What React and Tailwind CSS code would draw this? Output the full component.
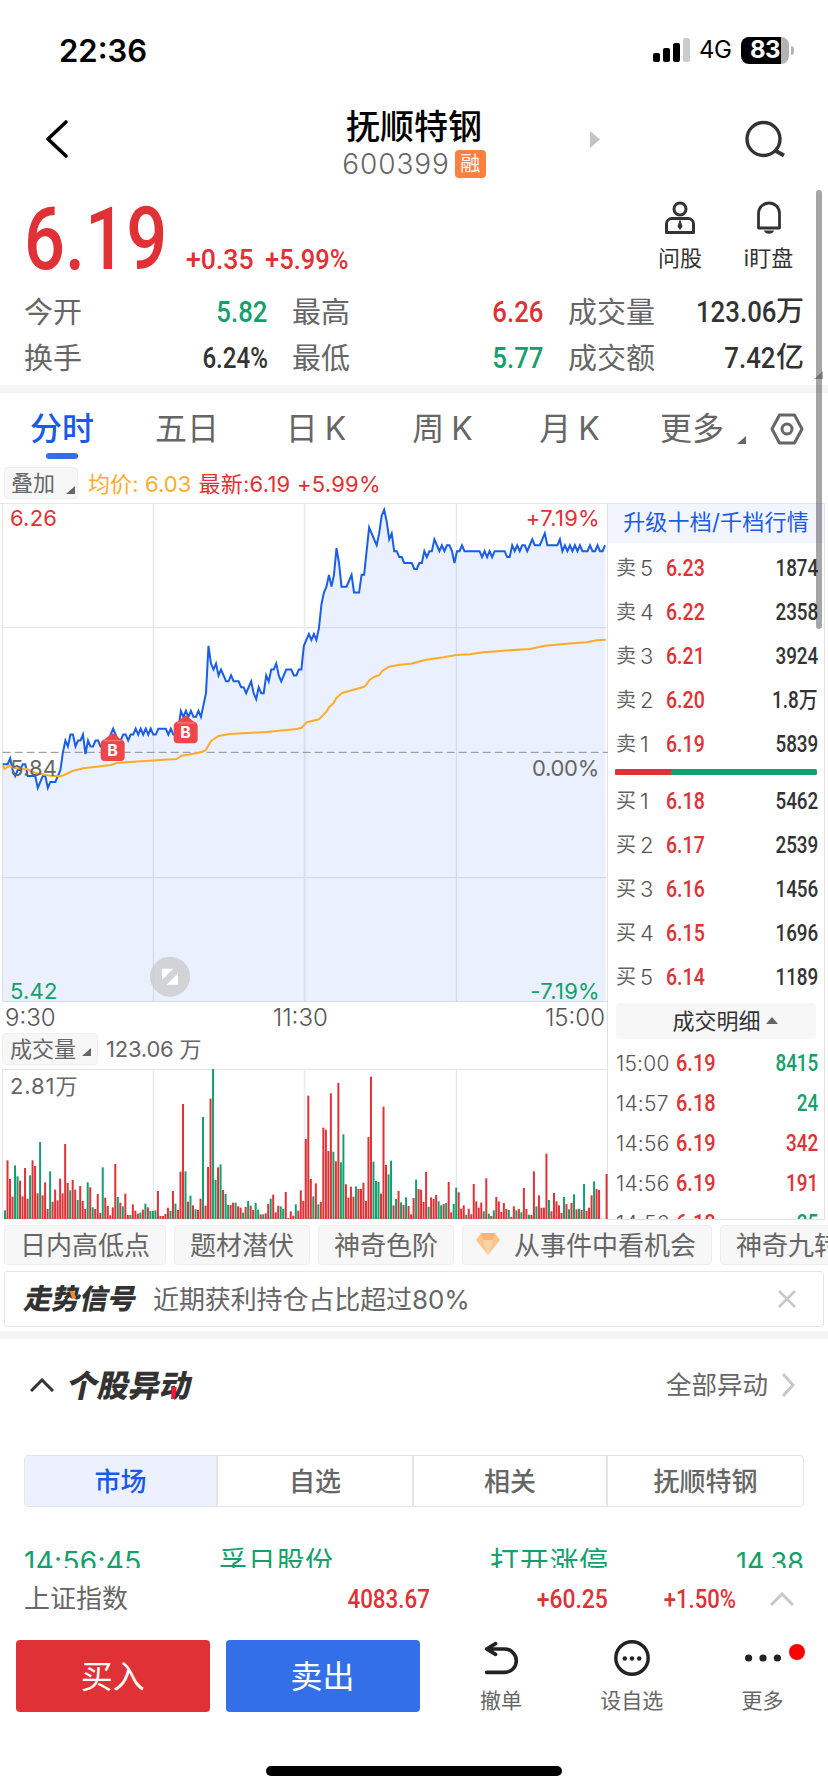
import clsx from "clsx";

const UP = "text-[#e03136]";
const DOWN = "text-[#14a06c]";
const DARK = "text-[#333333]";

// one value per minute, in cents from the previous close (5.84)
const prices = [
  -2, -2, -2, -1, -3, -4, -3, -3, -2, -2, -4, -4, -4, -4, -6, -5, -4, -4, -6, -5, -5, -5, -4, -3, 0, 2, 1, 3, 3, 1,
  2, 2, 3, -0.3, 2, 1, 1, 2, 2, 1, 1, 2, 2, 3, 4, 3, 2, 2, 3, 3, 2, 3, 3, 4, 3, 4, 3, 4, 3, 4,
  3, 3, 4, 4, 4, 4, 3, 4, 3, 3, 4, 7, 6, 7, 6, 7, 6, 6, 7, 6, 8, 10, 18, 15, 14, 15, 13, 14, 13, 12,
  12, 13, 12, 12, 12, 11, 11, 10, 11, 12, 10, 9, 11, 10, 10, 13, 12, 14, 14, 15, 13, 12, 13, 14, 14, 14, 13, 13, 14, 14,
  18, 19, 20, 19, 20, 19, 21, 25, 27, 28, 30, 28, 30, 34.5, 32, 28, 28, 28, 29, 30, 27, 27, 27, 30, 30, 34, 38, 37, 36, 35,
  37, 40, 41, 39, 36, 37, 34, 34, 33, 33, 32, 32, 32, 32, 31, 31, 32, 32, 34, 33, 34, 34, 36, 35, 34, 35, 34, 35, 35, 34,
  32, 34, 34, 35, 34, 34, 34, 34, 34, 34, 34, 33, 34, 33, 34, 33, 34, 34, 34, 34, 34, 33, 33, 35, 34, 35, 34, 35, 35, 34,
  35, 36, 35, 35, 35, 36, 37, 35, 35, 35, 35, 35, 36, 34, 35, 34, 35, 34, 35, 34, 35, 34, 34, 34, 35, 34, 34, 35, 34, 34, 35,
];

const average =
  "8,786 14,798 28,789 45,795 80,798 110,811 150,818 180,820 190,817 217,804 250,796 290,791 333,786 350,780 400,776 530,768 545,758 597,749 617,742 633,714 655,699 690,693 800,687 890,678 905,674 920,658 957,649 980,625 987,613 1001,600 1009,585 1026,570 1093,551 1100,544 1108,531 1122,522 1138,516 1147,504 1167,491 1200,485 1233,482 1275,471 1330,463 1370,456 1410,454 1450,448 1510,443 1590,438 1635,428 1700,422 1760,418 1790,412 1817,410";

// negative = selling minute (green)
const volumes = [
  -26, 176, 120, 67, -161, -128, 115, 68, 153, 61, -131, 176, 159, 77, -231, 71, 110, 30, -143, 52, 88, 56, 121, 77, 225, 108, -86, 117, 88, -57,
  99, 54, 30, -110, 95, -35, 30, 75, 18, -155, 64, 39, 11, 35, 165, -66, 49, -38, 76, 12, -12, 44, 25, 16, -19, 28, -46, 35, -24, -24,
  -26, 84, 9, 9, 15, 34, -24, 84, -46, 27, 142, 345, -143, 52, -70, 41, -29, 27, 61, -306, 40, 156, 361, -450, -117, 155, -164, 87, -75, -42,
  42, 49, -49, 38, 34, -19, 36, -54, 40, 27, -48, -28, 14, -14, 17, 45, -61, 73, 20, 40, -38, -30, 81, 3, 23, 10, -44, 25, 86, 54,
  240, 370, 120, -68, 107, -44, 51, 274, 268, 204, 377, -202, 173, 408, -170, -254, 104, 64, 97, 67, -98, 90, 90, 109, 54, 246, 427, -172, -114, -111,
  76, 337, 162, -134, -175, 41, -60, 84, -50, 42, -65, 39, 14, 63, -118, 90, 88, 51, 141, -37, 65, 60, 72, -53, -41, 45, -48, 111, 20, -45,
  -94, 80, 31, 41, -13, 31, 14, 105, 53, 34, 49, -23, 122, -16, 9, -26, 66, 53, 21, 48, 30, -27, 6, 38, -26, 30, -20, 93, 30, -13,
  12, 143, -38, 71, 34, 34, 196, -57, 23, 78, 53, 41, 18, -66, 45, -29, 48, -74, 29, -31, 27, -105, 24, 34, 71, -113, 90, 87, 0, 0, 135,
];

const stats = [
  ["今开", "5.82", DOWN, "最高", "6.26", UP, "成交量", "123.06", "万"],
  ["换手", "6.24%", DARK, "最低", "5.77", DOWN, "成交额", "7.42", "亿"],
];

const asks = [
  ["卖", "5", "6.23", "1874"],
  ["卖", "4", "6.22", "2358"],
  ["卖", "3", "6.21", "3924"],
  ["卖", "2", "6.20", "1.8万"],
  ["卖", "1", "6.19", "5839"],
];

const bids = [
  ["买", "1", "6.18", "5462"],
  ["买", "2", "6.17", "2539"],
  ["买", "3", "6.16", "1456"],
  ["买", "4", "6.15", "1696"],
  ["买", "5", "6.14", "1189"],
];

const trades = [
  ["15:00", "6.19", "8415", DOWN],
  ["14:57", "6.18", "24", DOWN],
  ["14:56", "6.19", "342", UP],
  ["14:56", "6.19", "191", UP],
  ["14:56", "6.18", "25", DOWN],
];

// condensed figures used for every quote
function Num({ children, className }) {
  return (
    <span className={clsx("inline-block whitespace-nowrap font-['Roboto','Noto_Sans_CJK_SC',sans-serif] font-medium", className)}>
      {children}
    </span>
  );
}

function StatusBar() {
  return (
    <div className="flex h-[100px] items-center justify-between pl-[59px] pr-[34px]">
      <span className="text-[31px] font-semibold leading-none text-black">22:36</span>
      <div className="flex items-center">
        <svg width="37" height="24" viewBox="0 0 37 24">
          <rect x="0" y="15" width="7" height="9" rx="2" />
          <rect x="10" y="10" width="7" height="14" rx="2" />
          <rect x="20" y="5" width="7" height="19" rx="2" />
          <rect x="30" y="0" width="7" height="24" rx="2" fill="#cccccc" />
        </svg>
        <span className="ml-[9px] w-[33px] text-[24px] leading-none tracking-[-0.5px] text-black">4G</span>
        <div className="ml-[9px] flex h-[27px] w-[48px] items-center justify-center rounded-[8px] bg-linear-to-r from-black from-83% to-[#b3b3b3] to-83% text-[24px] font-bold leading-none tracking-[-0.5px] text-white">
          83
        </div>
        <span className="ml-[2px] h-[9px] w-[3px] rounded-r-full bg-[#b3b3b3]" />
      </div>
    </div>
  );
}

function Header() {
  return (
    <div className="relative flex h-[90px] justify-center">
      <svg className="absolute left-[44px] top-[19px]" width="26" height="40" viewBox="0 0 26 40" fill="none" stroke="#000" strokeWidth="3.6">
        <path d="M22 3 4 20l18 17" strokeLinecap="round" strokeLinejoin="round" />
      </svg>
      <div className="flex flex-col items-center">
        <div className="mt-[9px] text-[34px] font-medium leading-[36px] text-black">抚顺特钢</div>
        <div className="mt-[5px] flex h-[28px] items-center gap-[5px]">
          <span className="text-[28px] font-light leading-none tracking-[0.9px] text-[#666666]">600399</span>
          <span className="flex h-[28px] w-[31px] items-center justify-center rounded-[4px] bg-[#ff7f3f] text-[20px] leading-none text-white">融</span>
        </div>
      </div>
      <svg className="absolute left-[589px] top-[31px]" width="12" height="17" viewBox="0 0 12 17" fill="#c4c4c4">
        <path d="M1 0l10 8.500L1 17z" />
      </svg>
      <svg className="absolute left-[743px] top-[19px]" width="44" height="42" viewBox="0 0 44 42" fill="none" stroke="#333" strokeWidth="3.400">
        <circle cx="20.500" cy="20" r="16.500" />
        <path d="M32 31.500l9 5" strokeWidth="4" />
      </svg>
    </div>
  );
}

function Quote() {
  return (
    <div className="h-[195px]">
      <div className="flex h-[99px]">
        <div className="w-[160px] pl-[24px] pt-[5px]">
          <Num className={clsx("origin-left scale-x-[0.83] text-[87px] leading-[88px]", UP)}>6.19</Num>
        </div>
        <div className="flex flex-1 gap-[8px] pl-[26px] pt-[55px]">
          <Num className={clsx("w-[71px] origin-left scale-x-[0.95] text-[28px] leading-[30px]", UP)}>+0.35</Num>
          <Num className={clsx("origin-left scale-x-[0.91] text-[28px] leading-[30px]", UP)}>+5.99%</Num>
        </div>
        <div className="flex w-[88px] flex-col items-center pt-[11px]">
          <svg width="34" height="34" viewBox="0 0 34 34" fill="none" stroke="#333" strokeWidth="3">
            <circle cx="17" cy="8" r="6" />
            <path d="M3.500 31.500V23a5.500 5.500 0 0 1 5.500-5.500h16a5.500 5.500 0 0 1 5.500 5.500v8.500z" strokeLinejoin="round" />
            <path d="M17 18l2.500 7.500L17 29l-2.500-3.500z" fill="#333" stroke="none" />
          </svg>
          <span className="mt-[11px] text-[22px] leading-[24px] text-[#333333]">问股</span>
        </div>
        <div className="mr-[15px] flex w-[89px] flex-col items-center pt-[11px]">
          <svg width="34" height="34" viewBox="0 0 34 34" fill="none" stroke="#333" strokeWidth="2.800">
            <path d="M6.500 27V12.500a10.500 10.500 0 0 1 21 0V27z" strokeLinejoin="round" />
            <path d="M12 29.500h10a5.200 4.500 0 0 1-10 0z" fill="#333" stroke="none" />
          </svg>
          <span className="mt-[11px] text-[22px] leading-[24px] text-[#333333]">i盯盘</span>
        </div>
      </div>
      {stats.map(([l1, v1, c1, l2, v2, c2, l3, v3, unit]) => (
        <div key={l1} className="flex h-[46px] items-center pl-[24px] text-[29px] leading-none text-[#666666]">
          <span className="w-[80px]">{l1}</span>
          <div className="w-[164px] text-right">
            <Num className={clsx("origin-right text-[29px]", v1.endsWith("%") ? "scale-x-[0.83]" : "scale-x-[0.89]", c1)}>{v1}</Num>
          </div>
          <span className="ml-[24px] w-[80px]">{l2}</span>
          <div className="w-[172px] text-right">
            <Num className={clsx("origin-right scale-x-[0.89] text-[29px]", c2)}>{v2}</Num>
          </div>
          <span className="ml-[24px] w-[100px]">{l3}</span>
          <div className="flex w-[136px] items-center justify-end">
            <Num className={clsx("origin-right scale-x-[0.89] text-[29px]", DARK)}>{v3}</Num>
            <Num className={clsx("text-[28px]", DARK)}>{unit}</Num>
          </div>
        </div>
      ))}
    </div>
  );
}

function Corner({ className }) {
  return (
    <svg className={className} width="9" height="8" viewBox="0 0 9 8" fill="#666">
      <path d="M9 0v8H0z" />
    </svg>
  );
}

function Tabs() {
  return (
    <div className="flex h-[72px] text-[32px] leading-none text-[#666666]">
      <div className="flex w-[124px] flex-col items-center pt-[20px] font-medium text-[#1a5ae6]">
        分时
        <span className="mt-[8px] h-[6px] w-[32px] rounded-full bg-[#336fe8]" />
      </div>
      <span className="w-[126px] pt-[20px] text-center">五日</span>
      <span className="w-[131px] pt-[20px] text-center tracking-[-1px]">日 K</span>
      <span className="w-[122px] pt-[20px] text-center tracking-[-1px]">周 K</span>
      <span className="w-[132px] pt-[20px] text-center tracking-[-1px]">月 K</span>
      <div className="flex pl-[25px] pt-[20px]">
        更多
        <Corner className="ml-[13px] mt-[23px]" />
      </div>
      <svg className="ml-[24px] mt-[20px]" width="34" height="32" viewBox="0 0 34 32" fill="none" stroke="#666" strokeWidth="3">
        <path d="M9.500 2h15l7.500 14-7.500 14h-15L2 16z" strokeLinejoin="round" />
        <circle cx="17" cy="16" r="5" />
      </svg>
    </div>
  );
}

function PriceChart() {
  const line = prices.map((c, i) => `${8 + i * 7.53},${748 - c * 17.75}`).join(" ");
  return (
    <div className="relative h-[499px]">
      <svg width="608" height="499" viewBox="0 0 1824 1497" fill="none">
        <path d="M8 0v1497M460 0v1497M1369 0v1497M0 1h1824M8 374h1816M8 1124h1816" stroke="#e3e3e5" strokeWidth="3" />
        <path d="M914 0v1497" stroke="#ededef" strokeWidth="6" />
        <polygon points={`8,1497 ${line} 1817,1497`} fill="#336fe8" fillOpacity="0.1" />
        <path d="M8 1497h1816" stroke="#d5dbe9" strokeWidth="6" />
        <path d="M8 748h1816" stroke="#8c8f96" strokeWidth="3" strokeDasharray="24 12" />
        <polyline points={line} stroke="#1a5ee6" strokeWidth="6" />
        <polyline points={average} stroke="#fdab2b" strokeWidth="6" strokeLinejoin="round" />
        {[[338, 691], [557, 638]].map(([x, y]) => (
          <g key={x} transform={`translate(${x} ${y})`}>
            <path d="M-36 71V32q0-11 13-15L-4 1q4-3 8 0L23 17q13 4 13 15V71q0 12-12 12H-24q-12 0-12-12z" fill="#ef464c" />
            <path d="M-26 22h52" stroke="#f58a8e" strokeWidth="3" />
            <text x="0" y="67" textAnchor="middle" fill="#fff" fontSize="48" fontWeight="700" fontFamily="Inter">
              B
            </text>
          </g>
        ))}
        <circle cx="510" cy="1421" r="60" fill="#c9c9c9" fillOpacity="0.75" />
        <path d="M486 1397h34l-34 34zM534 1411v34h-34z" fill="#fff" />
      </svg>
      <span className={clsx("absolute left-[10px] top-[4px] text-[22px] leading-[22px] tracking-[0.2px]", UP)}>6.26</span>
      <span className={clsx("absolute right-[7px] top-[4px] text-[22px] leading-[22px] tracking-[0.3px]", UP)}>+7.19%</span>
      <span className="absolute left-[10px] top-[254px] text-[22px] leading-[22px] tracking-[0.2px] text-[#666666]">5.84</span>
      <span className="absolute right-[8px] top-[254px] text-[22px] leading-[22px] tracking-[-0.3px] text-[#666666]">0.00%</span>
      <span className={clsx("absolute bottom-0 left-[10px] text-[22px] leading-[22px] tracking-[0.2px]", DOWN)}>5.42</span>
      <span className={clsx("absolute bottom-0 right-[7px] text-[22px] leading-[22px] tracking-[0.3px]", DOWN)}>-7.19%</span>
    </div>
  );
}

function VolumeChart() {
  return (
    <div className="relative h-[151px]">
      <svg width="608" height="151" viewBox="0 0 1824 453" fill="none">
        <path d="M8 0v450M460 0v450M1369 0v450M8 1.500h1816M8 449h1816" stroke="#e3e3e5" strokeWidth="3" />
        <path d="M914 0v450" stroke="#ededef" strokeWidth="6" />
        {volumes.map((v, i) => (
          <rect key={i} x={12 + i * 7.52} y={450 - Math.abs(v)} width="6" height={Math.abs(v)} fill={v < 0 ? "#14a06c" : "#e03136"} />
        ))}
      </svg>
      <span className="absolute left-[10px] top-[6px] text-[22px] leading-[22px] tracking-[0.9px] text-[#666666]">2.81万</span>
    </div>
  );
}

function BookRow({ row }) {
  const [side, level, price, amount] = row;
  return (
    <div className="flex h-[44px] items-center pl-[8px] pr-[6px] leading-none">
      <span className="w-[24px] text-[20px] text-[#666666]">{side}</span>
      <span className="w-[26px] text-[22px] font-light text-[#555555]">{level}</span>
      <Num className={clsx("origin-left scale-x-[0.85] text-[23px]", UP)}>{price}</Num>
      <div className="flex-1 text-right">
        <Num className={clsx("origin-right scale-x-[0.82] text-[23px]", DARK)}>{amount}</Num>
      </div>
    </div>
  );
}

function OrderBook() {
  return (
    <div className="flex h-[717px] w-[218px] flex-col overflow-hidden border border-[#e3e3e5]">
      <div className="flex h-[39px] shrink-0 items-center justify-center bg-[#f2f5fe] pb-[3px] text-[22px] leading-none tracking-[0.2px] text-[#1a5ae6]">
        升级十档/千档行情
      </div>
      <div className="mt-[3px]">
        {asks.map((row) => (
          <BookRow key={row[1]} row={row} />
        ))}
      </div>
      <svg className="ml-[7px] mt-[3px] shrink-0" width="202" height="6" viewBox="0 0 202 6">
        <rect width="202" height="6" rx="1.500" fill="#14a06c" />
        <path d="M1.500 0H57l-1.500 6h-54Q0 6 0 4.500v-3Q0 0 1.500 0z" fill="#e03136" />
      </svg>
      <div className="mt-[4px]">
        {bids.map((row) => (
          <BookRow key={row[1]} row={row} />
        ))}
      </div>
      <div className="ml-[8px] mt-[4px] flex h-[36px] w-[200px] shrink-0 items-center justify-center rounded-[4px] bg-[#f7f7f7] pb-[1px] pl-[18px] text-[22px] leading-none text-[#333333]">
        成交明细
        <svg className="ml-[5px]" width="12" height="7" viewBox="0 0 12 7" fill="#666">
          <path d="M6 0l6 7H0z" />
        </svg>
      </div>
      <div className="mt-[4px]">
        {trades.map(([time, price, amount, tone], i) => (
          <div key={i} className="flex h-[40px] items-center pl-[8px] pr-[6px] leading-none">
            <span className="w-[60px] text-[21px] font-light tracking-[0.2px] text-[#555555]">{time}</span>
            <Num className={clsx("origin-left scale-x-[0.87] text-[23px]", UP)}>{price}</Num>
            <div className="flex-1 text-right">
              <Num className={clsx("origin-right scale-x-[0.82] text-[23px]", tone)}>{amount}</Num>
            </div>
          </div>
        ))}
      </div>
    </div>
  );
}

function Chip({ children }) {
  return (
    <div className="flex h-[40px] shrink-0 items-center rounded-[4px] border border-[#eeeeee] bg-[#f7f7f7] px-[15px] pt-[1px] text-[26px] leading-none text-[#666666]">
      {children}
    </div>
  );
}

function Chips() {
  return (
    <div className="mt-[5px] flex gap-[8px] overflow-hidden pl-[4px]">
      <Chip>日内高低点</Chip>
      <Chip>题材潜伏</Chip>
      <Chip>神奇色阶</Chip>
      <Chip>
        <svg className="mr-[14px] -ml-[2px] -mt-[4px]" width="24" height="22" viewBox="0 0 24 22">
          <path d="M5 0h14l5 7-12 15L0 7z" fill="#fbc590" />
          <path d="M7 7h10l-5 15z" fill="#f9d3a8" />
          <path d="M5 0h14l-2 7H7z" fill="#f6b578" />
        </svg>
        从事件中看机会
      </Chip>
      <Chip>神奇九转</Chip>
    </div>
  );
}

function SignalCard() {
  return (
    <div className="mx-[4px] mt-[6px] flex h-[56px] items-center rounded-[3px] border border-[#e6e6e6] pl-[20px] leading-none">
      <span className="relative w-[128px] -skew-x-12 text-[28px] font-black text-[#333333]">
        走势信号
        <svg className="absolute left-[43px] top-[6px]" width="8" height="8" viewBox="0 0 8 8">
          <path d="M0 0h4l4 7-4 1z" fill="#f08a28" />
        </svg>
      </span>
      <span className="pt-[1px] text-[26px] tracking-[-0.1px] text-[#666666]">近期获利持仓占比超过80%</span>
      <svg className="ml-auto mr-[27px]" width="18" height="18" viewBox="0 0 18 18" stroke="#c8c8c8" strokeWidth="2.500">
        <path d="M1 1l16 16M17 1L1 17" />
      </svg>
    </div>
  );
}

function Movements() {
  return (
    <div className="h-[229px] overflow-hidden px-[24px] leading-none">
      <div className="flex h-[92px] items-center">
        <svg className="ml-[6px]" width="24" height="14" viewBox="0 0 24 14" fill="none" stroke="#333" strokeWidth="3">
          <path d="M1 13L12 2l11 11" />
        </svg>
        <span className="relative ml-[14px] -skew-x-12 text-[31px] font-black text-[#333333]">
          个股异动
          <svg className="absolute right-[14px] bottom-[2px]" width="6" height="12" viewBox="0 0 6 12">
            <path d="M0 0h5l1 12H2z" fill="#f5173c" />
          </svg>
        </span>
        <span className="ml-auto text-[25.5px] text-[#666666]">全部异动</span>
        <svg className="ml-[13px] mr-[9px]" width="14" height="24" viewBox="0 0 14 24" fill="none" stroke="#c8c8c8" strokeWidth="3">
          <path d="M2 1l10 11L2 23" />
        </svg>
      </div>
      <div className="mt-[24px] flex h-[52px] divide-x-2 divide-[#e5e5e5] overflow-hidden rounded-[4px] border border-[#e5e5e5] text-[26px] font-medium text-[#666666]">
        <div className="flex w-[193px] items-center justify-center bg-[#ecf1fd] pt-[2px] text-[#1a5ae6]">市场</div>
        <div className="flex w-[196px] items-center justify-center pt-[2px]">自选</div>
        <div className="flex w-[194px] items-center justify-center pt-[2px]">相关</div>
        <div className="flex flex-1 items-center justify-center pt-[2px]">抚顺特钢</div>
      </div>
      <div className={clsx("mt-[41px] flex h-[28px] items-center whitespace-nowrap text-[28px]", DOWN)}>
        <span className="w-[195px] text-[28px] tracking-[0.3px]">14:56:45</span>
        <span className="w-[271px] tracking-[0.7px]">孚日股份</span>
        <span className="text-[29px] tracking-[0.7px]">打开涨停</span>
        <span className="ml-auto text-[27px]">14.38</span>
      </div>
    </div>
  );
}

function IndexBar() {
  return (
    <div className="flex h-[60px] items-center pl-[24px] pr-[34px] pt-[1px] leading-none">
      <span className="w-[180px] text-[26px] text-[#666666]">上证指数</span>
      <div className="w-[226px] text-right">
        <Num className={clsx("origin-right scale-x-[0.86] text-[26px]", UP)}>4083.67</Num>
      </div>
      <div className="w-[178px] text-right">
        <Num className={clsx("origin-right scale-x-[0.88] text-[26px]", UP)}>+60.25</Num>
      </div>
      <div className="w-[128px] text-right">
        <Num className={clsx("origin-right scale-x-[0.85] text-[26px]", UP)}>+1.50%</Num>
      </div>
      <svg className="ml-auto" width="24" height="14" viewBox="0 0 24 14" fill="none" stroke="#c8c8c8" strokeWidth="3">
        <path d="M1 13L12 2l11 11" />
      </svg>
    </div>
  );
}

function Tool({ label, children, className }) {
  return (
    <div className={clsx("flex w-[131px] flex-col items-center", className)}>
      {children}
      <span className="mt-[14px] text-[21px] leading-[22px] text-[#666666]">{label}</span>
    </div>
  );
}

function ActionBar() {
  return (
    <div className="mt-[12px] flex h-[72px] pl-[16px] leading-none">
      <button className="h-[72px] w-[194px] rounded-[4px] bg-[#e03136] pt-[2px] text-[32px] text-white">买入</button>
      <button className="ml-[16px] h-[72px] w-[194px] rounded-[4px] bg-[#336fe8] pt-[2px] text-[32px] text-white">卖出</button>
      <Tool label="撤单" className="ml-[16px]">
        <svg width="40" height="40" viewBox="0 0 40 40" fill="none" stroke="#222" strokeWidth="4" strokeLinecap="round" strokeLinejoin="round">
          <path d="M14 4L4 10l10 6M4 10h20a13 13 0 0 1 0 26H4" />
        </svg>
      </Tool>
      <Tool label="设自选">
        <svg width="40" height="40" viewBox="0 0 40 40" fill="#222">
          <circle cx="20" cy="20" r="18" fill="none" stroke="#222" strokeWidth="3.800" />
          <circle cx="12" cy="20.500" r="2.500" />
          <circle cx="20" cy="20.500" r="2.500" />
          <circle cx="28" cy="20.500" r="2.500" />
        </svg>
      </Tool>
      <Tool label="更多" className="relative">
        <svg width="40" height="40" viewBox="0 0 40 40" fill="#222">
          <circle cx="4" cy="20" r="4" />
          <circle cx="20" cy="20" r="4" />
          <circle cx="36" cy="20" r="4" />
        </svg>
        <span className="absolute left-[92px] top-[4px] h-[16px] w-[16px] rounded-full bg-[#ff0000]" />
      </Tool>
    </div>
  );
}

export default function App() {
  return (
    <div className="relative flex h-[1792px] w-[828px] flex-col overflow-hidden bg-white font-['Inter','Noto_Sans_CJK_SC',sans-serif]">
      <StatusBar />
      <Header />
      <Quote />
      <div className="h-[8px] bg-[#f4f4f4]" />
      <Tabs />
      <div className="flex h-[38px] items-center pb-[1px] pl-[4px] text-[22px] leading-none">
        <div className="mt-[-1px] flex h-[32px] w-[74px] items-center rounded-[4px] border border-[#efefef] bg-[#f7f7f7] pl-[6px] text-[#666666]">
          叠加
          <Corner className="ml-[11px] mt-[13px]" />
        </div>
        <span className="ml-[10px] tracking-[0.1px] text-[#fdab2b]">均价: 6.03</span>
        <span className={clsx("ml-[7px] tracking-[0.25px]", UP)}>最新:6.19 +5.99%</span>
      </div>
      <div className="flex h-[717px]">
        <div className="w-[607px]">
          <PriceChart />
          <div className="flex h-[31px] items-center justify-between pl-[5px] pr-[2px] text-[24px] font-light leading-none text-[#555555]">
            <span>9:30</span>
            <span>11:30</span>
            <span>15:00</span>
          </div>
          <div className="flex h-[36px] items-start pl-[2px] text-[22px] leading-none text-[#666666]">
            <div className="flex h-[32px] w-[96px] items-center rounded-[4px] border border-[#efefef] bg-[#f7f7f7] pl-[7px]">
              成交量
              <Corner className="ml-[6px] mt-[6px]" />
            </div>
            <span className="ml-[8px] flex h-[32px] items-center tracking-[-0.2px]">123.06 万</span>
          </div>
          <VolumeChart />
        </div>
        <OrderBook />
      </div>
      <Chips />
      <SignalCard />
      <div className="mt-[4px] h-[8px] shrink-0 bg-[#f4f4f4]" />
      <Movements />
      <IndexBar />
      <ActionBar />
      <div className="mx-auto mt-[54px] h-[10px] w-[296px] rounded-full bg-black" />
      <Corner className="absolute left-[814px] top-[371px] opacity-50" />
      <div className="absolute left-[816px] top-[190px] h-[439px] w-[6px] rounded-full bg-black/35" />
    </div>
  );
}
